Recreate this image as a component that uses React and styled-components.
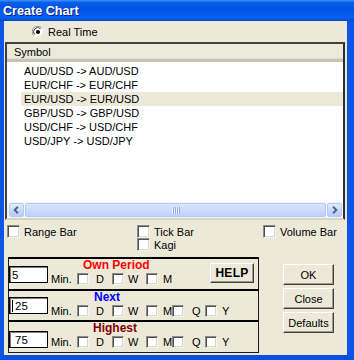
import React from 'react'
import styled, { createGlobalStyle } from 'styled-components'

const symbols = [
  'AUD/USD -> AUD/USD',
  'EUR/CHF -> EUR/CHF',
  'EUR/USD -> EUR/USD',
  'GBP/USD -> GBP/USD',
  'USD/CHF -> USD/CHF',
  'USD/JPY -> USD/JPY',
]

const periods = [
  { key: 'own', title: 'Own Period', color: '#ff0000', titleLeft: 32, height: 32, fieldTop: 7, value: '5', checks: ['D', 'W', 'M'], help: true },
  { key: 'next', title: 'Next', color: '#0000ff', titleLeft: 43, height: 31, fieldTop: 6, value: '25', caret: true, checks: ['D', 'W', 'M', 'Q', 'Y'] },
  { key: 'high', title: 'Highest', color: '#800000', titleLeft: 42, height: 33, fieldTop: 9, value: '75', indent: 5, checks: ['D', 'W', 'M', 'Q', 'Y'], last: true },
]

// width of each check + label slot, read off the screenshot
const slotWidth = { D: 35, W: 34, M: 26, Q: 33, Y: 30 }
const labelGap = { D: 7, W: 4, M: 5, Q: 8, Y: 5 }

const Radio = () => (
  <svg width="12" height="12" viewBox="0 0 12 12">
    <circle cx="6" cy="6" r="5.5" fill="#fff" />
    <path d="M1.8 9.6 A5.3 5.3 0 0 1 9.6 1.8" stroke="#8a8a8a" strokeWidth="1" fill="none" />
    <path d="M2.8 8.6 A4 4 0 0 1 8.6 2.8" stroke="#404040" strokeWidth="1" fill="none" />
    <path d="M9.6 1.8 A5.3 5.3 0 0 1 1.8 9.6" stroke="#e8e6da" strokeWidth="1" fill="none" />
    <circle cx="6" cy="6" r="2" fill="#000" />
  </svg>
)

const Chevron = ({ dir }) => (
  <svg width="14" height="14" viewBox="0 0 14 14">
    <polyline
      points={dir === 'left' ? '8.5,3.5 5,7 8.5,10.5' : '5.5,3.5 9,7 5.5,10.5'}
      fill="none"
      stroke="#4d6185"
      strokeWidth="2"
    />
  </svg>
)

export default function App() {
  return (
    <>
      <GlobalStyle />
      <Window>
        <TitleBar>Create Chart</TitleBar>
        <Frame>
          <RadioRow>
            <Radio />
            <span>Real Time</span>
          </RadioRow>

          <ListBox>
            <ListHeader>Symbol</ListHeader>
            <Items>
              {symbols.map((s, i) => (
                <Item key={s} selected={i === 2}>{s}</Item>
              ))}
            </Items>
            <Scrollbar>
              <ScrollArrow><Chevron dir="left" /></ScrollArrow>
              <Thumb>
                <Grip />
              </Thumb>
              <ScrollArrow><Chevron dir="right" /></ScrollArrow>
            </Scrollbar>
          </ListBox>

          <Options>
            <OptionLabel><CheckBox />Range Bar</OptionLabel>
            <OptionLabel><CheckBox />Tick Bar</OptionLabel>
            <OptionLabel><CheckBox />Volume Bar</OptionLabel>
            <span />
            <OptionLabel><CheckBox />Kagi</OptionLabel>
          </Options>

          <Bottom>
            <Groups>
              {periods.map(p => (
                <Group key={p.key} height={p.height} last={p.last}>
                  <Field top={p.fieldTop} indent={p.indent}>
                    {p.caret && <Caret />}
                    {p.value}
                  </Field>
                  <Controls>
                    <GroupTitle color={p.color} left={p.titleLeft}>{p.title}</GroupTitle>
                    <CheckRow>
                      <MinLabel>Min.</MinLabel>
                      {p.checks.map(c => (
                        <Slot key={c} width={slotWidth[c]}>
                          <CheckBox small />
                          <SlotLabel gap={labelGap[c]}>{c}</SlotLabel>
                        </Slot>
                      ))}
                    </CheckRow>
                  </Controls>
                  {p.help && <HelpButton>HELP</HelpButton>}
                </Group>
              ))}
            </Groups>
            <Buttons>
              <Button>OK</Button>
              <Button>Close</Button>
              <Button>Defaults</Button>
            </Buttons>
          </Bottom>
        </Frame>
      </Window>
    </>
  )
}

const GlobalStyle = createGlobalStyle`
  body {
    margin: 0;
    background: #fff;
  }
  * {
    box-sizing: border-box;
  }
`

const Window = styled.div`
  width: 354px;
  height: 360px;
  display: flex;
  flex-direction: column;
  font-family: 'Liberation Sans', Arial, sans-serif;
  font-size: 11px;
  color: #000;
  overflow: hidden;
`

const TitleBar = styled.div`
  height: 21px;
  flex: none;
  display: flex;
  align-items: center;
  padding: 1px 0 0 3px;
  color: #fff;
  font-weight: bold;
  font-size: 12.6px;
  text-shadow: 1px 1px #0f1c8a;
  background: linear-gradient(
    180deg,
    #3d95ff 0%,
    #0a5de8 12%,
    #0054e3 45%,
    #0760ef 85%,
    #0047cf 100%
  );
`

const Frame = styled.div`
  flex: 1;
  display: flex;
  flex-direction: column;
  background: #ece9d8;
  border-left: 4px solid #0a55e6;
  border-right: 7px solid #0a55e6;
  border-bottom: 5px solid #0a4fe0;
`

const RadioRow = styled.div`
  height: 21px;
  flex: none;
  display: flex;
  align-items: center;
  gap: 4px;
  padding-left: 28px;
`

const ListBox = styled.div`
  margin-left: 1px;
  width: 340px;
  height: 178px;
  flex: none;
  display: flex;
  flex-direction: column;
  background: #fff;
  border: 2px solid;
  border-color: #404040 #2e2e2e #d8d4c4 #404040;
`

const ListHeader = styled.div`
  height: 18px;
  flex: none;
  display: flex;
  align-items: center;
  padding-left: 7px;
  background: #ebeadb;
  border-bottom: 3px solid #c7c4b2;
  box-shadow: inset 0 -1px #dedbc9;
`

const Items = styled.div`
  flex: 1;
  padding-top: 2px;
`

const Item = styled.div`
  height: 14px;
  line-height: 14px;
  margin-left: 14px;
  padding-left: 3px;
  white-space: nowrap;
  background: ${p => (p.selected ? '#ece9d8' : 'transparent')};
`

const Scrollbar = styled.div`
  height: 16px;
  flex: none;
  display: flex;
  gap: 1px;
  padding: 1px 1px 1px 2px;
  background: #f7f6f0;
`

const ScrollArrow = styled.div`
  width: 15px;
  flex: none;
  display: flex;
  align-items: center;
  justify-content: center;
  border: 1px solid #b5c9f7;
  border-radius: 2px;
  background: linear-gradient(180deg, #e3ecfe 0%, #c4d6fc 60%, #b6cbf8 100%);
`

const Thumb = styled.div`
  flex: 1;
  display: flex;
  align-items: center;
  justify-content: center;
  border: 1px solid #b3c8f5;
  border-radius: 2px;
  background: linear-gradient(180deg, #dae6fe 0%, #cbdafc 55%, #c0d2fa 100%);
`

const Grip = styled.div`
  width: 8px;
  height: 7px;
  background: repeating-linear-gradient(
    90deg,
    #eef4ff 0px,
    #eef4ff 1px,
    #8eaef2 1px,
    #8eaef2 2px
  );
`

const Options = styled.div`
  margin-top: 5px;
  display: grid;
  grid-template-columns: 130px 126px 1fr;
  grid-auto-rows: 13px;
  padding-left: 3px;
`

const OptionLabel = styled.label`
  display: flex;
  align-items: center;
  gap: 4px;
  white-space: nowrap;
`

const CheckBox = styled.span`
  flex: none;
  display: inline-block;
  width: ${p => (p.small ? 12 : 13)}px;
  height: ${p => (p.small ? 12 : 13)}px;
  background: #fff;
  border: 1px solid;
  border-color: #8c8c8c #f4f3ee #f4f3ee #8c8c8c;
  box-shadow: inset 1px 1px #505050, inset -1px -1px #dcd8c8;
`

const Bottom = styled.div`
  margin-top: 6px;
  display: flex;
  padding-left: 4px;
`

const Groups = styled.div`
  width: 251px;
  display: flex;
  flex-direction: column;
`

const Group = styled.div`
  height: ${p => p.height}px;
  display: flex;
  align-items: flex-start;
  border-top: 2px solid #000;
  border-left: 1px solid #1a1a1a;
  border-right: 1px solid #1a1a1a;
  border-bottom: ${p => (p.last ? '1px solid #1a1a1a' : 'none')};
`

const Field = styled.div`
  width: 39px;
  height: 17px;
  flex: none;
  margin-top: ${p => p.top}px;
  display: flex;
  align-items: center;
  padding-left: ${p => p.indent || 2}px;
  background: #fff;
  border: 1px solid #000;
  box-shadow: inset 1px 1px #7a7a7a;
  font-size: 11.5px;
`

const Caret = styled.span`
  width: 1px;
  height: 12px;
  margin-right: 2px;
  background: #000;
`

const Controls = styled.div`
  flex: 1;
  margin-left: 3px;
  display: flex;
  flex-direction: column;
`

const GroupTitle = styled.div`
  height: 12px;
  line-height: 12px;
  padding-left: ${p => p.left}px;
  color: ${p => p.color};
  font-weight: bold;
  font-size: 12px;
  white-space: nowrap;
`

const CheckRow = styled.div`
  display: flex;
  align-items: flex-end;
  height: 13px;
  margin-top: 1px;
`

const MinLabel = styled.span`
  width: 26px;
  flex: none;
  line-height: 12px;
`

const Slot = styled.span`
  width: ${p => p.width}px;
  flex: none;
  display: flex;
  align-items: center;
`

const SlotLabel = styled.span`
  margin-left: ${p => p.gap}px;
  line-height: 12px;
`

const raised = `
  display: flex;
  align-items: center;
  justify-content: center;
  background: #ece9d8;
  border: 1px solid;
  border-color: #fff #404040 #404040 #fff;
  box-shadow: inset -1px -1px #9d9a8c;
`

const HelpButton = styled.div`
  ${raised};
  width: 44px;
  height: 20px;
  flex: none;
  margin: 4px 4px 0 0;
  font-weight: bold;
  font-size: 12px;
  letter-spacing: 0.3px;
`

const Buttons = styled.div`
  margin-left: 24px;
  padding-top: 7px;
  display: flex;
  flex-direction: column;
  gap: 3px;
`

const Button = styled.div`
  ${raised};
  width: 51px;
  height: 21px;
`
